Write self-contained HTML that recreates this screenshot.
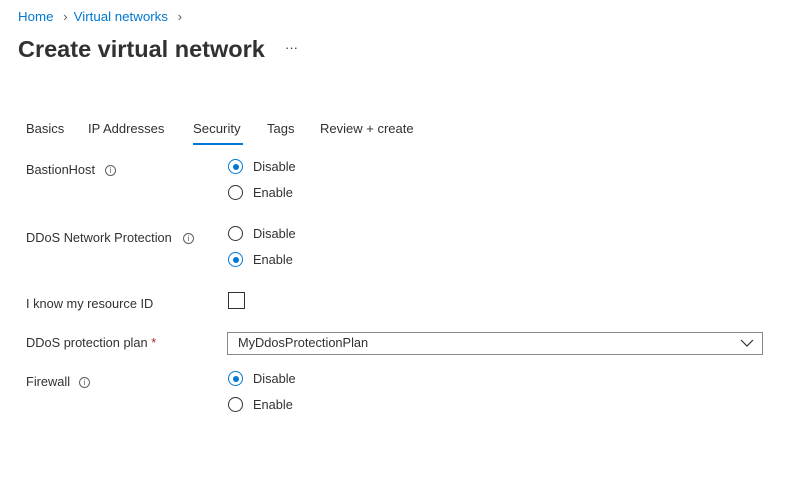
<!DOCTYPE html><html><head><style>
body{margin:0;width:794px;height:486px;background:#fff;font-family:"Liberation Sans",sans-serif;color:#323130;position:relative;overflow:hidden}
.a{position:absolute;white-space:nowrap;font-size:12.8px;line-height:16px}
.r{position:absolute;width:15px;height:15px;border:1px solid #323130;border-radius:50%;box-sizing:border-box}
.r.on{border-color:#0078d4}
.r.on::after{content:"";position:absolute;left:3.5px;top:3.5px;width:6px;height:6px;border-radius:50%;background:#0078d4}
.i{position:absolute;width:11px;height:11px;border:1px solid #605e5c;border-radius:50%;box-sizing:border-box;font-size:8px;line-height:9px;text-align:center;color:#605e5c}
</style></head><body>
<div class="a" style="left:18px;top:9px;font-size:13.3px;color:#0078d4">Home <span style="color:#605e5c;margin:0 6px">&#8250;</span>Virtual networks <span style="color:#605e5c;margin-left:6px">&#8250;</span></div>
<div class="a" style="left:18px;top:34px;font-size:23.5px;line-height:30px;font-weight:bold;color:#323130">Create virtual network</div>
<div class="a" style="left:285px;top:40px;font-size:13px">···</div>
<div class="a" style="left:26px;top:121px;font-size:13px">Basics</div>
<div class="a" style="left:88px;top:121px;font-size:13px">IP Addresses</div>
<div class="a" style="left:193px;top:121px;font-size:13.2px">Security</div>
<div style="position:absolute;left:193px;top:143px;width:50px;height:2px;background:#0078d4"></div>
<div class="a" style="left:267px;top:121px;font-size:13px">Tags</div>
<div class="a" style="left:320px;top:121px;font-size:13px">Review + create</div>

<div class="a" style="left:26px;top:162px">BastionHost</div><div class="i" style="left:105px;top:165px">i</div>
<div class="r on" style="left:228px;top:159px"></div><div class="a" style="left:253px;top:159px">Disable</div>
<div class="r" style="left:228px;top:185px"></div><div class="a" style="left:253px;top:185px">Enable</div>

<div class="a" style="left:26px;top:230px">DDoS Network Protection</div><div class="i" style="left:183px;top:233px">i</div>
<div class="r" style="left:228px;top:226px"></div><div class="a" style="left:253px;top:226px">Disable</div>
<div class="r on" style="left:228px;top:252px"></div><div class="a" style="left:253px;top:252px">Enable</div>

<div class="a" style="left:26px;top:296px">I know my resource ID</div>
<div style="position:absolute;left:228px;top:292px;width:17px;height:17px;border:1px solid #323130;box-sizing:border-box"></div>

<div class="a" style="left:26px;top:335px">DDoS protection plan <span style="color:#a4262c">*</span></div>
<div style="position:absolute;left:227px;top:332px;width:536px;height:23px;border:1px solid #8a8886;box-sizing:border-box"></div>
<div class="a" style="left:238px;top:335px">MyDdosProtectionPlan</div>
<svg style="position:absolute;left:740px;top:338px" width="14" height="10"><path d="M1 2 L7 8 L13 2" fill="none" stroke="#323130" stroke-width="1.2"/></svg>

<div class="a" style="left:26px;top:374px">Firewall</div><div class="i" style="left:79px;top:377px">i</div>
<div class="r on" style="left:228px;top:371px"></div><div class="a" style="left:253px;top:371px">Disable</div>
<div class="r" style="left:228px;top:397px"></div><div class="a" style="left:253px;top:397px">Enable</div>
</body></html>
